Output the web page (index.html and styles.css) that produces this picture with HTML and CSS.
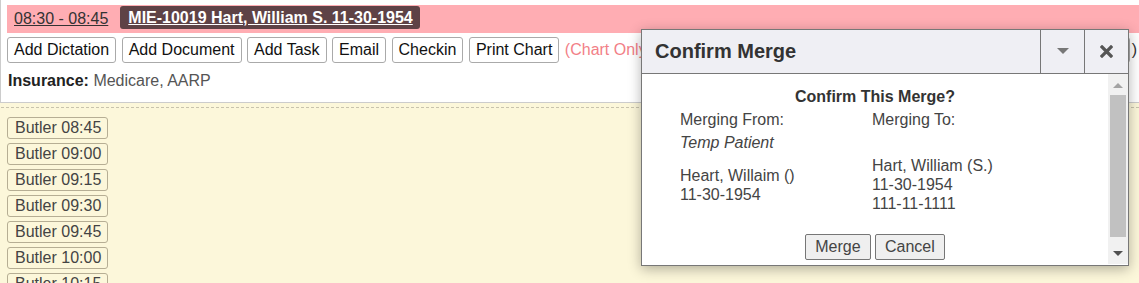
FILE: index.html
```html
<!DOCTYPE html>
<html lang="en">
<head>
  <meta charset="UTF-8" />
  <meta name="viewport" content="width=device-width, initial-scale=1.0"/>
  <title>Appointment</title>
  <link rel="stylesheet" href="styles.css">
</head>
<body>

  <div class="appt-panel">
    <div class="appt-bar">
      <a class="appt-time" href="#">08:30 - 08:45</a>
      <a class="patient-badge" href="#">MIE-10019 Hart, William S. 11-30-1954</a>
    </div>

    <div class="action-row">
      <button class="action-btn">Add Dictation</button>
      <button class="action-btn">Add Document</button>
      <button class="action-btn">Add Task</button>
      <button class="action-btn">Email</button>
      <button class="action-btn">Checkin</button>
      <button class="action-btn">Print Chart</button>
      <span class="chart-note">(Chart Only Appointment</span>
      <span class="row-tail"><button class="action-btn">Undo</button>)</span>
    </div>

    <div class="insurance"><b>Insurance:</b> <span class="insurance-list">Medicare, AARP</span></div>
  </div>

  <div class="slot-area">
    <div class="slot-list">
      <button class="slot-btn">Butler 08:45</button>
      <button class="slot-btn">Butler 09:00</button>
      <button class="slot-btn">Butler 09:15</button>
      <button class="slot-btn">Butler 09:30</button>
      <button class="slot-btn">Butler 09:45</button>
      <button class="slot-btn">Butler 10:00</button>
      <button class="slot-btn">Butler 10:15</button>
    </div>
  </div>

  <!-- merge dialog floats over the page -->
  <div class="merge-dialog">
    <div class="dialog-head">
      <span class="dialog-title">Confirm Merge</span>
      <button class="head-btn" title="Options">
        <svg width="12" height="7" viewBox="0 0 12 7"><polygon points="0,0 12,0 6,6" fill="#777"/></svg>
      </button>
      <button class="head-btn" title="Close">
        <svg width="13" height="13" viewBox="0 0 13 13"><path d="M2 2 L11 11 M11 2 L2 11" stroke="#555" stroke-width="3.2" stroke-linecap="square"/></svg>
      </button>
    </div>

    <div class="dialog-body">
      <div class="dialog-content">
        <div class="merge-question">Confirm This Merge?</div>
        <table class="merge-table">
          <tr>
            <td>Merging From:</td>
            <td>Merging To:</td>
          </tr>
          <tr>
            <td><i>Temp Patient</i></td>
            <td></td>
          </tr>
          <tr>
            <td>Heart, Willaim ()<br>11-30-1954</td>
            <td>Hart, William (S.)<br>11-30-1954<br>111-11-1111</td>
          </tr>
        </table>
        <div class="dialog-buttons">
          <button class="dlg-btn">Merge</button>
          <button class="dlg-btn">Cancel</button>
        </div>
      </div>

      <div class="fake-scroll">
        <span class="arrow-up"></span>
        <span class="scroll-thumb"></span>
        <span class="arrow-down"></span>
      </div>
    </div>
  </div>

</body>
</html>
```

FILE: styles.css
```css
body {
  font-family: "Liberation Sans", Arial, sans-serif;
  font-size: 16px;
  margin: 0;
  background-color: #fcf7da;
  color: #222;
  overflow: hidden;
}

.appt-panel {
  background-color: white;
  border-left: 1px solid #ccc;
  border-bottom: 1px solid #ccc;
  padding: 5px 0 12px 6px;
}

.appt-bar {
  display: flex;
  align-items: flex-start;
  height: 28px;
  padding-left: 7px;
  background-color: #ffadb3;
}

.appt-time {
  color: #333;
  line-height: 23px;
  margin-top: 2px;
  margin-right: 12px;
}

.patient-badge {
  margin-top: 1px;
  background-color: #5e4246;
  color: white;
  font-weight: bold;
  line-height: 23px;
  padding: 0 7px 0 8px;
  border-radius: 3px;
}

.action-row {
  display: flex;
  align-items: center;
  gap: 5.5px;
  margin-top: 4px;
  white-space: nowrap;
}

.action-btn {
  font-family: inherit;
  font-size: 16px;
  line-height: 20px;
  color: #111;
  background-color: white;
  border: 1px solid #aaa;
  border-radius: 3px;
  padding: 2px 6px;
}

.chart-note {
  color: #f27f87;
}

.row-tail {
  margin-left: auto;
  padding-right: 2px;
  color: #333;
}

.row-tail .action-btn {
  margin-right: 2px;
}

.insurance {
  margin-top: 8px;
  margin-left: 1px;
  line-height: 19px;
}

.insurance-list {
  color: #555;
}

.slot-area {
  padding: 4px 0 0 1px;
}

.slot-list {
  border-top: 1px dashed #c8c3ad;
  padding: 9px 0 0 6px;
  display: flex;
  flex-direction: column;
  align-items: flex-start;
  gap: 4px;
}

.slot-btn {
  font-family: inherit;
  font-size: 16px;
  line-height: 18px;
  color: #444;
  background-color: transparent;
  border: 1px solid #b6ae94;
  border-radius: 3px;
  padding: 1px 6px 1px 7px;
}

.merge-dialog {
  position: absolute;
  left: 641px;
  top: 29px;
  width: 486px;
  height: 235px;
  border: 1px solid #777;
  background-color: white;
  box-shadow: 0 3px 12px rgba(0, 0, 0, 0.3);
  color: #444;
}

.dialog-head {
  display: flex;
  height: 43px;
  background-color: #efeff4;
  border-bottom: 1px solid #777;
}

.dialog-title {
  flex: 1;
  padding-left: 13px;
  font-size: 20px;
  font-weight: bold;
  line-height: 43px;
  color: #333;
}

.head-btn {
  width: 44px;
  height: 43px;
  padding: 0;
  border: none;
  border-left: 1px solid #777;
  background-color: transparent;
  display: flex;
  align-items: center;
  justify-content: center;
}

.dialog-body {
  display: flex;
  height: 190px;
}

.dialog-content {
  flex: 1;
  padding-top: 13px;
  line-height: 19px;
}

.merge-question {
  text-align: center;
  font-weight: bold;
  color: #333;
}

.merge-table {
  border-collapse: collapse;
  margin: 2px 0 0 36px;
}

.merge-table td {
  padding: 2px 2px;
  width: 188px;
  vertical-align: middle;
}

.dialog-buttons {
  text-align: center;
  margin-top: 19px;
}

.dlg-btn {
  font-family: inherit;
  font-size: 16px;
  line-height: 20px;
  color: #444;
  background-color: #efefef;
  border: 1px solid #767676;
  border-radius: 2px;
  padding: 2px 9px;
}

.fake-scroll {
  width: 20px;
  background-color: #f1f1f1;
  display: flex;
  flex-direction: column;
  align-items: center;
}

.arrow-up {
  margin-top: 9px;
  border-left: 5px solid transparent;
  border-right: 5px solid transparent;
  border-bottom: 5px solid #a3a3a3;
}

.scroll-thumb {
  margin-top: 7px;
  width: 16px;
  height: 142px;
  background-color: #c1c1c1;
}

.arrow-down {
  margin-top: 14px;
  border-left: 5px solid transparent;
  border-right: 5px solid transparent;
  border-top: 5px solid #505050;
}
```
